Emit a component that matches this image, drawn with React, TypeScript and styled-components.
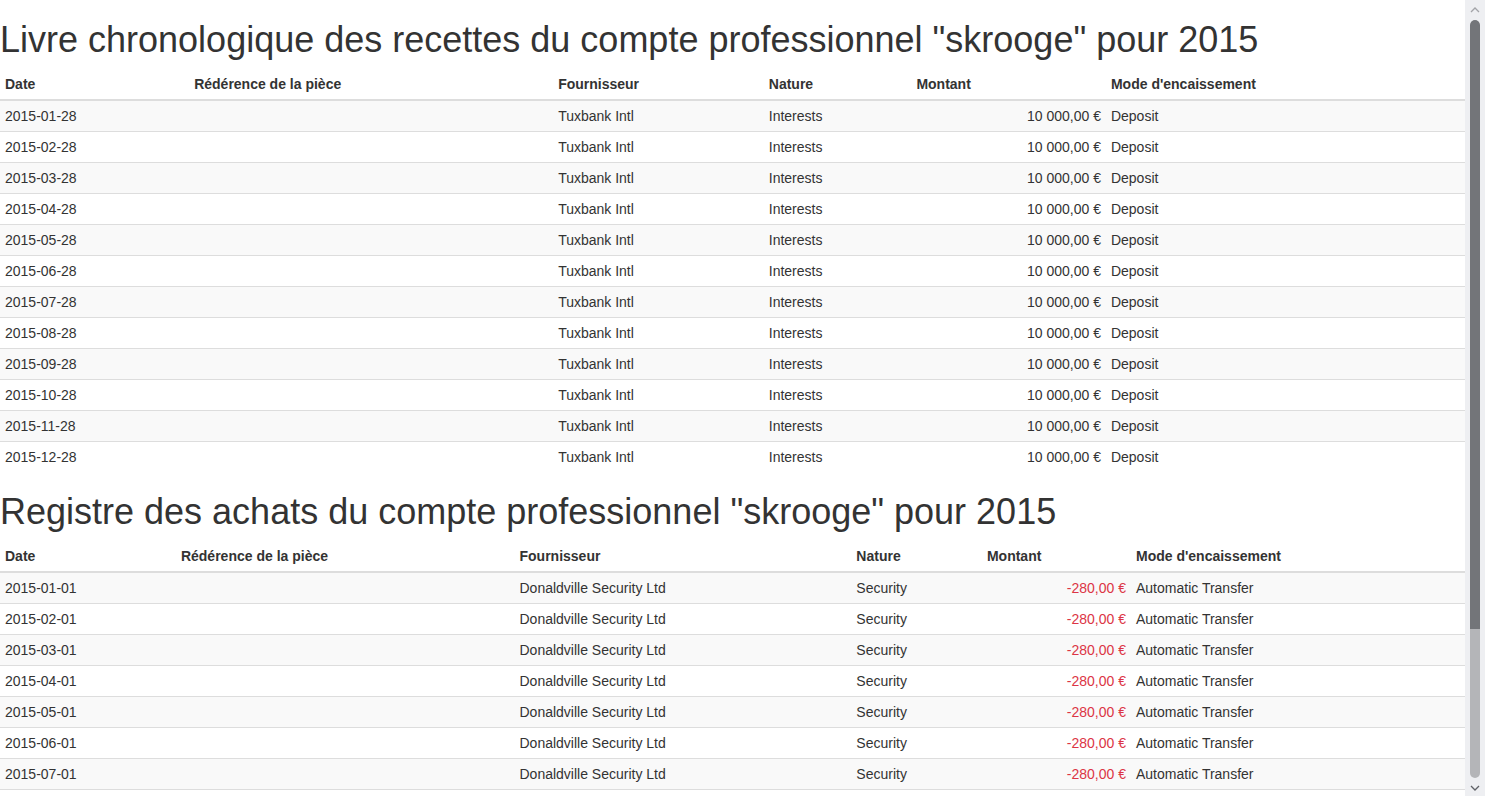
import React from "react";
import styled, { createGlobalStyle } from "styled-components";

const Global = createGlobalStyle`
  html, body {
    margin: 0;
    padding: 0;
    background: #fff;
  }
  body {
    font-family: "Liberation Sans", Arial, Helvetica, sans-serif;
    font-size: 14px;
    line-height: 1.42857143;
    color: #333;
  }
  * { box-sizing: border-box; }
`;

const Page = styled.div`
  padding-right: 20px;
`;

const ScrollRail = styled.div`
  position: fixed;
  top: 0;
  right: 0;
  width: 20px;
  height: 100vh;
  background: #eeeff2;
  display: flex;
  flex-direction: column;
  align-items: center;
  padding: 6px 0 4px;
  gap: 6px;
`;

const Arrow = styled.svg`
  display: block;
  width: 10px;
  height: 8px;
  flex: none;
`;

const Track = styled.div`
  flex: 1;
  width: 10px;
  border-radius: 5px;
  background: #b4b5b8;
  display: flex;
  flex-direction: column;
  overflow: hidden;
`;

const Thumb = styled.div`
  height: 80.4%;
  background: #737579;
  border-radius: 5px 5px 0 0;
`;

const Title = styled.h1`
  font-family: "Liberation Sans", Arial, Helvetica, sans-serif;
  font-size: 36px;
  font-weight: 500;
  line-height: 40px;
  margin: 20px 0 9px;
  color: #333;
`;

const Table = styled.table`
  width: 100%;
  max-width: 100%;
  border-collapse: collapse;
  border-spacing: 0;
  margin-bottom: 20px;
`;

const Th = styled.th`
  text-align: left;
  font-weight: bold;
  padding: 5px;
  vertical-align: bottom;
  border-bottom: 2px solid #ddd;
  line-height: 1.42857143;
`;

const Row = styled.tr<{ $striped: boolean }>`
  background: ${(p) => (p.$striped ? "#f9f9f9" : "transparent")};
`;

const Td = styled.td<{ $align?: "left" | "right"; $negative?: boolean }>`
  padding: 5px;
  border-top: 1px solid #ddd;
  vertical-align: top;
  line-height: 1.42857143;
  text-align: ${(p) => p.$align ?? "left"};
  color: ${(p) => (p.$negative ? "#dc3545" : "inherit")};
  white-space: nowrap;
`;

type Entry = {
  date: string;
  ref: string;
  supplier: string;
  nature: string;
  amount: string;
  negative?: boolean;
  mode: string;
};

const months = ["01", "02", "03", "04", "05", "06", "07", "08", "09", "10", "11", "12"];

const receipts: Entry[] = months.map((m) => ({
  date: `2015-${m}-28`,
  ref: "",
  supplier: "Tuxbank Intl",
  nature: "Interests",
  amount: "10 000,00 €",
  mode: "Deposit",
}));

const purchases: Entry[] = months.map((m) => ({
  date: `2015-${m}-01`,
  ref: "",
  supplier: "Donaldville Security Ltd",
  nature: "Security",
  amount: "-280,00 €",
  negative: true,
  mode: "Automatic Transfer",
}));

const headers = ["Date", "Rédérence de la pièce", "Fournisseur", "Nature", "Montant", "Mode d'encaissement"];

function Ledger({ title, rows }: { title: string; rows: Entry[] }) {
  return (
    <>
      <Title>{title}</Title>
      <Table>
        <thead>
          <tr>
            {headers.map((h) => (
              <Th key={h}>{h}</Th>
            ))}
          </tr>
        </thead>
        <tbody>
          {rows.map((r, i) => (
            <Row key={r.date} $striped={i % 2 === 0}>
              <Td>{r.date}</Td>
              <Td>{r.ref}</Td>
              <Td>{r.supplier}</Td>
              <Td>{r.nature}</Td>
              <Td $align="right" $negative={r.negative}>
                {r.amount}
              </Td>
              <Td>{r.mode}</Td>
            </Row>
          ))}
        </tbody>
      </Table>
    </>
  );
}

function Scrollbar() {
  return (
    <ScrollRail aria-hidden="true">
      <Arrow viewBox="0 0 10 8">
        <path d="M1 6 L5 2 L9 6" fill="none" stroke="#a3a4a8" strokeWidth="1.3" />
      </Arrow>
      <Track>
        <Thumb />
      </Track>
      <Arrow viewBox="0 0 10 8">
        <path d="M1 2 L5 6 L9 2" fill="none" stroke="#5f6166" strokeWidth="1.3" />
      </Arrow>
    </ScrollRail>
  );
}

export default function App() {
  return (
    <Page>
      <Global />
      <Ledger title={'Livre chronologique des recettes du compte professionnel "skrooge" pour 2015'} rows={receipts} />
      <Ledger title={'Registre des achats du compte professionnel "skrooge" pour 2015'} rows={purchases} />
      <Scrollbar />
    </Page>
  );
}
